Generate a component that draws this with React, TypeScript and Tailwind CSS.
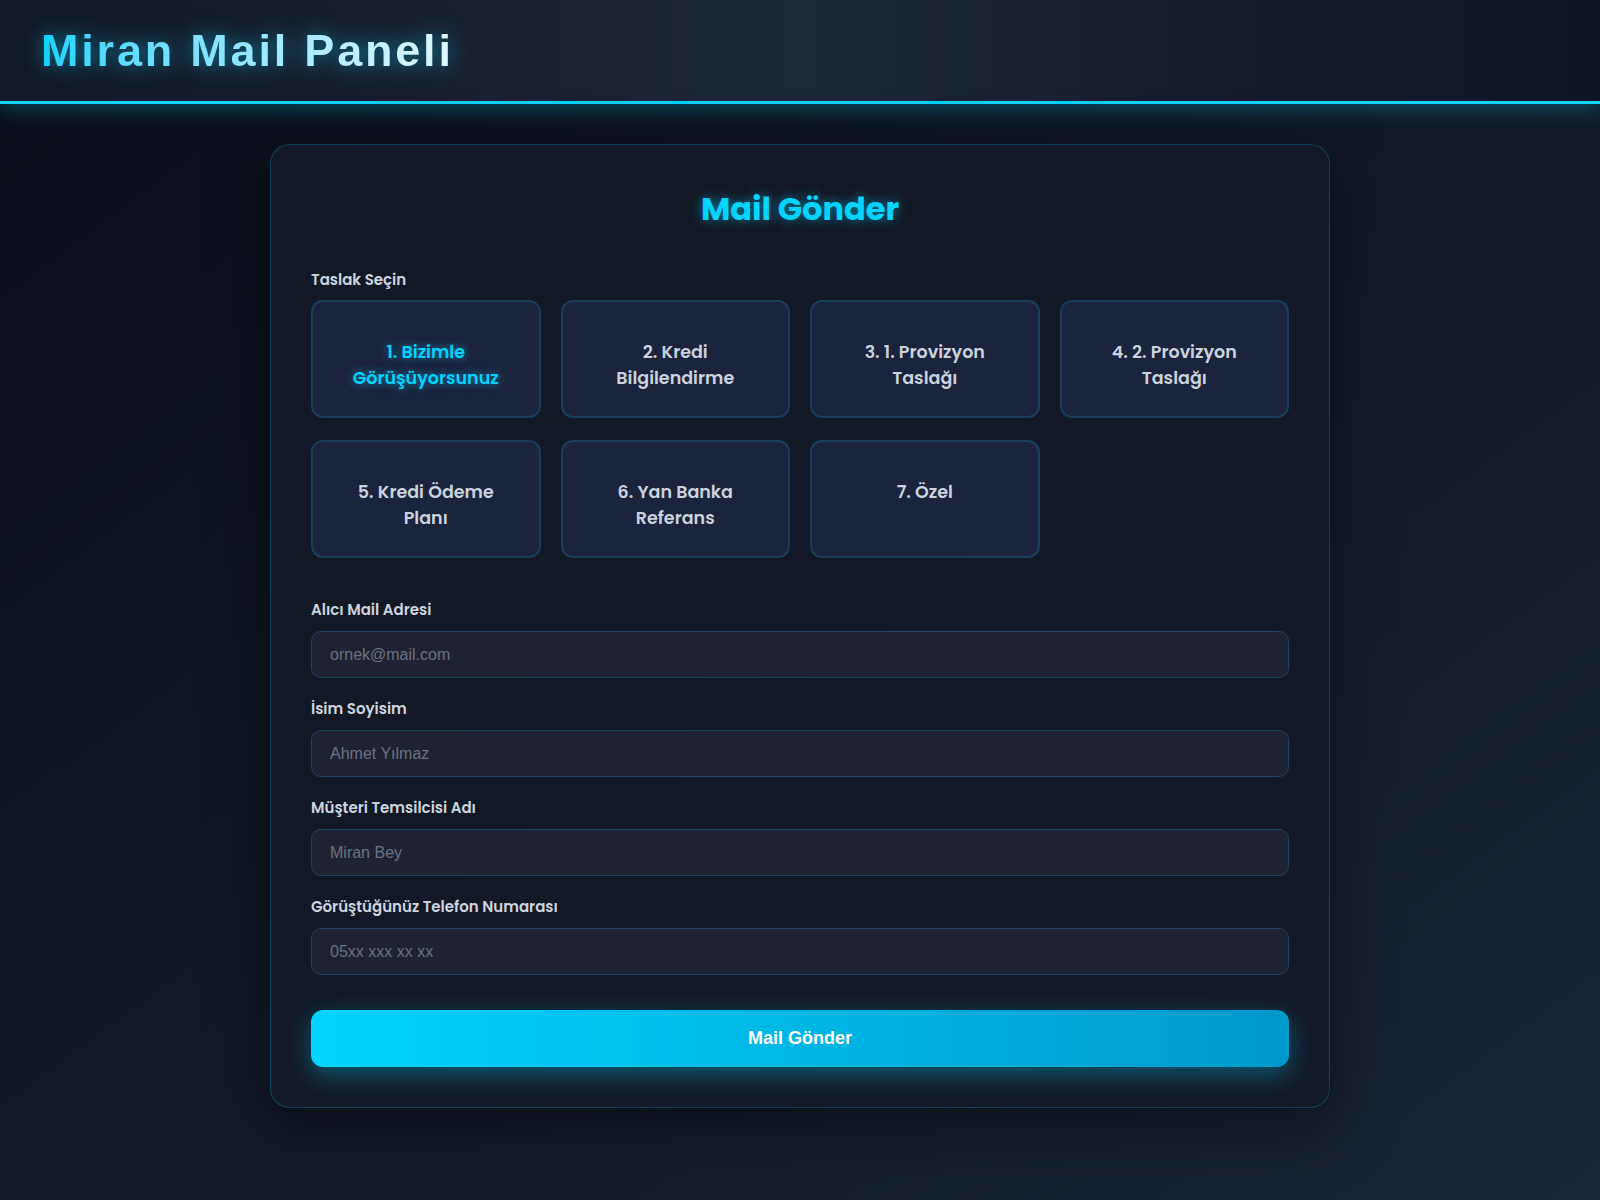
import React, { useState } from 'react';

const templates = [
  '1. Bizimle Görüşüyorsunuz',
  '2. Kredi Bilgilendirme',
  '3. 1. Provizyon Taslağı',
  '4. 2. Provizyon Taslağı',
  '5. Kredi Ödeme Planı',
  '6. Yan Banka Referans',
  '7. Özel',
];

const fields = [
  { label: 'Alıcı Mail Adresi', placeholder: 'ornek@mail.com' },
  { label: 'İsim Soyisim', placeholder: 'Ahmet Yılmaz' },
  { label: 'Müşteri Temsilcisi Adı', placeholder: 'Miran Bey' },
  { label: 'Görüştüğünüz Telefon Numarası', placeholder: '05xx xxx xx xx' },
];

const sans = "font-['Poppins','Inter',sans-serif]";

export default function App() {
  const [selected, setSelected] = useState(0);

  return (
    <div className="min-h-screen bg-gradient-to-br from-[#0a0e17] via-[#111826] to-[#1b2538] font-['Liberation_Sans',Arial,sans-serif]">
      {/* Header */}
      <header className="h-[104px] flex items-center pl-[41px] bg-gradient-to-r from-[#111827] via-[#1e2737] to-[#0d1424] border-b-[3px] border-[#00d4ff] shadow-[0_4px_20px_rgba(0,212,255,0.3)]">
        <h1 className="text-[45px] leading-[1.15] font-bold tracking-[2.8px] bg-gradient-to-r from-[#00d4ff] to-[#e0f7ff] bg-clip-text text-transparent drop-shadow-[0_0_10px_rgba(0,212,255,0.55)]">
          Miran Mail Paneli
        </h1>
      </header>

      {/* Card */}
      <main className="pt-10 pb-10">
        <div
          className={`w-[1060px] mx-auto p-10 rounded-[20px] border border-[rgba(0,212,255,0.22)] bg-[rgba(19,25,38,0.92)] shadow-[0_20px_60px_rgba(0,0,0,0.5)] ${sans}`}
        >
          <h2 className="text-center text-[32px] leading-[48px] font-bold text-[#00d4ff] [text-shadow:0_0_12px_rgba(0,212,255,0.55)]">
            Mail Gönder
          </h2>

          <div className="mt-[36px] mb-[9px] text-[15px] leading-[22px] font-semibold text-[#cdd4df]">
            Taslak Seçin
          </div>

          <div className="grid grid-cols-4 gap-x-5 gap-y-[22px]">
            {templates.map((t, i) => (
              <button
                key={t}
                onClick={() => setSelected(i)}
                className={`h-[118px] rounded-xl border-2 border-[#173f5c] bg-[#1b233d] px-6 pt-[37px] flex items-start justify-center text-center text-[17.5px] leading-[26px] font-semibold ${
                  selected === i
                    ? 'text-[#00d4ff] [text-shadow:0_0_10px_rgba(0,212,255,0.6)]'
                    : 'text-[#cbd3df]'
                }`}
              >
                {t}
              </button>
            ))}
          </div>

          <div className="mt-[41px] flex flex-col gap-5">
            {fields.map((f) => (
              <div key={f.label}>
                <label className="block mb-[10px] text-[15px] leading-[22px] font-semibold text-[#cdd4df]">
                  {f.label}
                </label>
                <input
                  type="text"
                  placeholder={f.placeholder}
                  className="w-full h-[47px] rounded-[10px] border border-[#1a4460] bg-[#1f2232] px-[18px] text-[16px] text-white placeholder:text-[#6b7280] outline-none font-['Liberation_Sans',Arial,sans-serif]"
                />
              </div>
            ))}
          </div>

          <button className="mt-[35px] w-full h-[57px] rounded-xl bg-gradient-to-r from-[#00d4ff] to-[#0099cc] text-white text-[18px] font-bold shadow-[0_8px_25px_rgba(0,212,255,0.35)] font-['Liberation_Sans',Arial,sans-serif]">
            Mail Gönder
          </button>
        </div>
      </main>
    </div>
  );
}
